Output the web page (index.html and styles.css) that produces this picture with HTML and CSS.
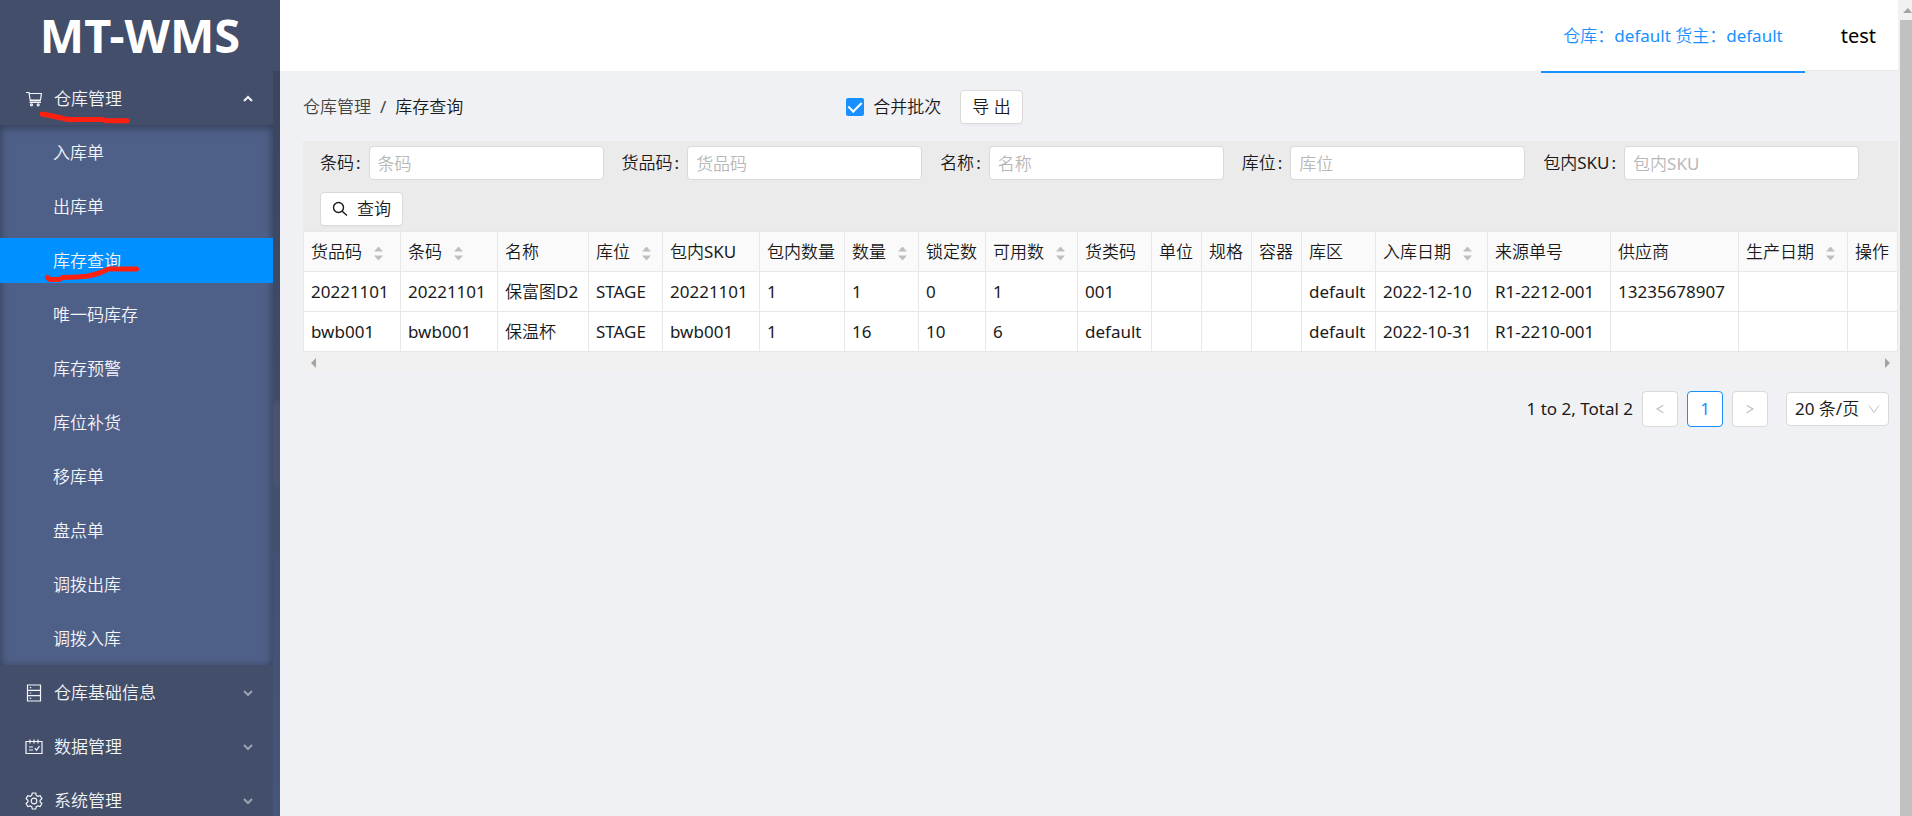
FILE: index.html
```html
<!DOCTYPE html>
<html lang="zh-CN">
<head>
<meta charset="utf-8">
<title>MT-WMS</title>
<link rel="stylesheet" href="styles.css">
</head>
<body>
<div class="app">
  <aside class="sidebar">
    <h1 class="logo">MT-WMS</h1>
    <div class="menu-scroll">
      <nav class="menu">
        <button type="button" class="menu-title open">
          <svg class="menu-icon" viewBox="0 0 18 18"><path d="M1 2.500h3l1.300 8.500h10.500M4.400 3.500h12l-.9 6.500H5.200M4.500 12.500h11.500"/><circle cx="6.500" cy="14.800" r="1"/><circle cx="13.200" cy="14.800" r="1"/></svg>
          <span>仓库管理</span>
          <svg class="arrow" viewBox="0 0 12 12"><path d="M2 8l4-4 4 4"/></svg>
        </button>
        <ul class="submenu">
          <li><a href="#">入库单</a></li>
          <li><a href="#">出库单</a></li>
          <li><a href="#" class="selected">库存查询</a></li>
          <li><a href="#">唯一码库存</a></li>
          <li><a href="#">库存预警</a></li>
          <li><a href="#">库位补货</a></li>
          <li><a href="#">移库单</a></li>
          <li><a href="#">盘点单</a></li>
          <li><a href="#">调拨出库</a></li>
          <li><a href="#">调拨入库</a></li>
        </ul>
        <button type="button" class="menu-title">
          <svg class="menu-icon" viewBox="0 0 18 18"><path d="M2.500 1h13v16h-13zM2.500 6.300h13M2.500 11.700h13M4.800 3.700h1.400M4.800 9h1.400M4.800 14.300h1.400"/></svg>
          <span>仓库基础信息</span>
          <svg class="arrow" viewBox="0 0 12 12"><path d="M2 4l4 4 4-4"/></svg>
        </button>
        <button type="button" class="menu-title">
          <svg class="menu-icon" viewBox="0 0 18 18"><path d="M1 3.500h16v12H1zM5 1.500v4M9 1.500v4M13 1.500v4M4 9h4M4 12h4M9.800 10.200l1.700 2 3-4"/></svg>
          <span>数据管理</span>
          <svg class="arrow" viewBox="0 0 12 12"><path d="M2 4l4 4 4-4"/></svg>
        </button>
        <button type="button" class="menu-title">
          <svg class="menu-icon" viewBox="0 0 18 18"><path d="M7.300 1h3.400l.6 2.400 1.500.9 2.400-.7 1.700 3-1.800 1.600v1.700l1.800 1.600-1.700 3-2.400-.7-1.500.9-.6 2.300H7.300l-.6-2.300-1.500-.9-2.400.7-1.700-3 1.800-1.600V8.200L1.100 6.600l1.700-3 2.400.7 1.500-.9z"/><circle cx="9" cy="9" r="2.800"/></svg>
          <span>系统管理</span>
          <svg class="arrow" viewBox="0 0 12 12"><path d="M2 4l4 4 4-4"/></svg>
        </button>
      </nav>
      <div class="menu-track"></div>
    </div>
    <svg class="marks" viewBox="0 0 280 300">
      <path d="M42 114l8 1.500 9 2 9 2h34l5 1.300h20"/>
      <path d="M47.500 277.500l2 2h10l3-2 14-.5 12-1 11-3 9-4h28"/>
    </svg>
  </aside>

  <div class="main">
    <header class="topbar">
      <a href="#" class="tenant">仓库：default 货主：default</a>
      <span class="user">test</span>
    </header>

    <main class="content">
      <div class="toolbar">
        <nav class="breadcrumb"><a href="#">仓库管理</a><span class="sep">/</span><span class="current">库存查询</span></nav>
        <label class="check"><input type="checkbox" checked><span>合并批次</span></label>
        <button type="button" class="btn">导 出</button>
      </div>

      <form class="filters">
        <div class="field"><label for="f1">条码</label><input id="f1" type="text" placeholder="条码"></div>
        <div class="field"><label for="f2">货品码</label><input id="f2" type="text" placeholder="货品码"></div>
        <div class="field"><label for="f3">名称</label><input id="f3" type="text" placeholder="名称"></div>
        <div class="field"><label for="f4">库位</label><input id="f4" type="text" placeholder="库位"></div>
        <div class="field"><label for="f5">包内SKU</label><input id="f5" type="text" placeholder="包内SKU"></div>
        <button type="button" class="btn search">
          <svg viewBox="0 0 16 16"><circle cx="6.500" cy="6.500" r="5"/><path d="M10.200 10.200l4.800 4.300"/></svg>
          <span>查询</span>
        </button>
      </form>

      <table class="grid">
        <colgroup>
          <col class="w97"><col class="w97"><col class="w91"><col class="w74"><col class="w97"><col class="w85"><col class="w74"><col class="w67"><col class="w92"><col class="w74"><col class="w50"><col class="w50"><col class="w50"><col class="w74"><col class="w112"><col class="w123"><col class="w128"><col class="w109"><col class="w50">
        </colgroup>
        <thead>
          <tr>
            <th class="sort">货品码</th><th class="sort">条码</th><th>名称</th><th class="sort">库位</th><th>包内SKU</th><th>包内数量</th><th class="sort">数量</th><th>锁定数</th><th class="sort">可用数</th><th>货类码</th><th>单位</th><th>规格</th><th>容器</th><th>库区</th><th class="sort">入库日期</th><th>来源单号</th><th>供应商</th><th class="sort">生产日期</th><th>操作</th>
          </tr>
        </thead>
        <tbody>
          <tr><td>20221101</td><td>20221101</td><td>保富图D2</td><td>STAGE</td><td>20221101</td><td>1</td><td>1</td><td>0</td><td>1</td><td>001</td><td></td><td></td><td></td><td>default</td><td>2022-12-10</td><td>R1-2212-001</td><td>13235678907</td><td></td><td></td></tr>
          <tr><td>bwb001</td><td>bwb001</td><td>保温杯</td><td>STAGE</td><td>bwb001</td><td>1</td><td>16</td><td>10</td><td>6</td><td>default</td><td></td><td></td><td></td><td>default</td><td>2022-10-31</td><td>R1-2210-001</td><td></td><td></td><td></td></tr>
        </tbody>
      </table>
      <div class="hscroll"><i class="tri-left"></i><i class="tri-right"></i></div>

      <div class="pager">
        <span class="total">1 to 2, Total 2</span>
        <button type="button" class="page" disabled aria-label="上一页"><svg viewBox="0 0 12 12"><path d="M10 1.500L2.500 6l7.500 4.500"/></svg></button>
        <button type="button" class="page active">1</button>
        <button type="button" class="page" disabled aria-label="下一页"><svg viewBox="0 0 12 12"><path d="M2 1.500L9.500 6 2 10.500"/></svg></button>
        <span class="size">
          <select aria-label="每页条数"><option>20 条/页</option></select>
          <svg viewBox="0 0 12 12"><path d="M1 2.500l5 7 5-7"/></svg>
        </span>
      </div>
    </main>
  </div>

  <div class="vscroll"><i class="tri-up"></i><div class="thumb"></div></div>
</div>
</body>
</html>
```
FILE: styles.css
```css
* { box-sizing: border-box; }

body {
  margin: 0;
  font: 17px/26px "Noto Sans", "Noto Sans CJK SC DemiLight", "Noto Sans CJK SC Light", "Noto Sans CJK SC", sans-serif;
  color: #1a1a1a;
  background: #f0f1f5;
}

a { color: inherit; text-decoration: none; }
button, input, select { font: inherit; color: inherit; }

.app { display: flex; height: 100vh; overflow: hidden; }

/* Sidebar */
.sidebar {
  position: relative;
  flex: 0 0 280px;
  display: flex;
  flex-direction: column;
  background: #424e6a;
  color: #f4f5f8;
}
.logo {
  flex: none;
  height: 71px;
  margin: 0;
  text-align: center;
  font-size: 47px;
  line-height: 71px;
  color: #fff;
}
.menu-scroll { flex: 1; display: flex; min-height: 0; }
.menu { flex: 1; overflow: hidden; }
.menu-track {
  flex: 0 0 7px;
  background: linear-gradient(#3a4660, #404c67 44%, #4a5470 45%, #4a5470 55%, #42506f 56%, #46557a);
}
.menu-title {
  display: flex;
  align-items: center;
  width: 100%;
  height: 54px;
  padding: 2px 19px 0 25px;
  border: 0;
  background: none;
}
.menu-title span { flex: 1; text-align: left; }
.menu-icon { width: 18px; height: 18px; margin-right: 11px; stroke-width: 1.2; }
svg { fill: none; stroke: currentColor; }
.arrow { width: 12px; height: 12px; opacity: .5; stroke-width: 2; }
.open .arrow { opacity: 1; }
.submenu {
  margin: 0;
  padding: 0;
  list-style: none;
  background: #4f6088;
  box-shadow: inset 0 2px 10px rgba(0, 0, 0, .4);
}
.submenu li { padding: 5px 0 4px; }
.submenu a { display: block; padding-left: 53px; line-height: 45px; }
.submenu .selected { background: #0090ff; }
.marks {
  position: absolute;
  top: 0;
  left: 0;
  width: 280px;
  height: 300px;
  stroke: #ff2010;
  stroke-width: 5;
  stroke-linecap: round;
  stroke-linejoin: round;
  pointer-events: none;
}

/* Main column */
.main { flex: 1; min-width: 0; }
.topbar {
  display: flex;
  justify-content: flex-end;
  height: 71px;
  background: #fff;
  line-height: 71px;
}
.tenant {
  height: 73px;
  padding: 0 22px;
  border-bottom: 2px solid #1890ff;
  color: #1890ff;
}
.user {
  padding: 0 22px 0 36px;
  border-bottom: 1px solid #e8e8e8;
  font-size: 20px;
  color: #000;
}
.content { padding-left: 23px; }
.toolbar { display: flex; align-items: center; height: 70px; padding-top: 2px; }
.breadcrumb { flex: 0 0 34%; color: #444; }
.sep { margin: 0 9px; }
.current { color: #1a1a1a; }
.check { display: flex; align-items: center; margin-right: 19px; }
.check input {
  appearance: none;
  width: 18px;
  height: 18px;
  margin: 0 9px 0 1px;
  border-radius: 2px;
  background: #1890ff;
  display: grid;
  place-items: center;
}
.check input:checked::after {
  content: "";
  width: 6px;
  height: 11px;
  margin-bottom: 3px;
  border: solid #fff;
  border-width: 0 2px 2px 0;
  transform: rotate(45deg);
}
.btn {
  height: 34px;
  padding: 0 11px;
  border: 1px solid #d9d9d9;
  border-radius: 4px;
  background: #fff;
  box-shadow: 0 2px 0 rgba(0, 0, 0, .02);
  line-height: 30px;
}

.filters {
  display: flex;
  flex-wrap: wrap;
  gap: 12px 18px;
  padding: 5px 17px;
  background: #ebebeb;
}
.field { display: flex; align-items: center; }
.field label::after { content: ":"; margin: 0 8px 0 2px; }
.field input {
  width: 235px;
  height: 34px;
  padding: 0 8px;
  border: 1px solid #d9d9d9;
  border-radius: 4px;
  background: #fff;
}
.field input::placeholder { color: #b8b8b8; opacity: 1; }
.search { display: flex; align-items: center; gap: 9px; }
.search svg { width: 16px; height: 16px; stroke-width: 1.4; }

.grid {
  width: calc(100% - 1px);
  table-layout: fixed;
  border-collapse: collapse;
  background: #fff;
}
.grid th, .grid td {
  height: 40px;
  padding: 0 0 0 7px;
  border: 1px solid #e8e8e8;
  text-align: left;
  font-weight: inherit;
  white-space: nowrap;
}
.grid th { background: #fafafa; }
.sort::after {
  content: "";
  display: inline-block;
  width: 9px;
  height: 14px;
  margin-left: 12px;
  vertical-align: -3px;
  background: #bfbfbf;
  clip-path: polygon(50% 0, 100% 36%, 0 36%, 0 64%, 100% 64%, 50% 100%, 0 64%, 0 36%);
}
.w50 { width: 50px; }
.w67 { width: 67px; }
.w74 { width: 74px; }
.w85 { width: 85px; }
.w91 { width: 91px; }
.w92 { width: 92px; }
.w97 { width: 97px; }
.w109 { width: 109px; }
.w112 { width: 112px; }
.w123 { width: 123px; }
.w128 { width: 128px; }

.hscroll {
  display: flex;
  justify-content: space-between;
  align-items: center;
  height: 21px;
  padding: 0 8px;
  background: #f0f0f0;
}
.tri-left, .tri-right { border: 5px solid transparent; }
.tri-left { border-left: 0; border-right-color: #a3a3a3; }
.tri-right { border-right: 0; border-left-color: #a3a3a3; }

.pager {
  display: flex;
  justify-content: flex-end;
  align-items: center;
  gap: 9px;
  padding: 18px 9px 0 0;
}
.page {
  width: 36px;
  height: 36px;
  padding: 0;
  border: 1px solid #d9d9d9;
  border-radius: 4px;
  background: #fff;
  display: grid;
  place-items: center;
  color: #bfbfbf;
}
.page svg { width: 10px; height: 12px; stroke-width: 1.4; }
.page.active { border-color: #1890ff; color: #1890ff; }
.size { position: relative; margin-left: 9px; }
.size select {
  appearance: none;
  display: block;
  width: 103px;
  height: 34px;
  padding: 0 8px;
  border: 1px solid #d9d9d9;
  border-radius: 4px;
  background: #fff;
}
.size svg {
  position: absolute;
  top: 11px;
  right: 9px;
  width: 12px;
  height: 12px;
  color: #bfbfbf;
}

/* Page scrollbar */
.vscroll {
  flex: 0 0 14px;
  display: flex;
  flex-direction: column;
  background: #f1f1f1;
}
.tri-up { margin: 3px 0 7px 5px; border: 5px solid transparent; border-bottom-color: #a3a3a3; border-right-width: 4px; }
.thumb { flex: 1; margin-left: 2px; background: #c1c1c1; }
```
